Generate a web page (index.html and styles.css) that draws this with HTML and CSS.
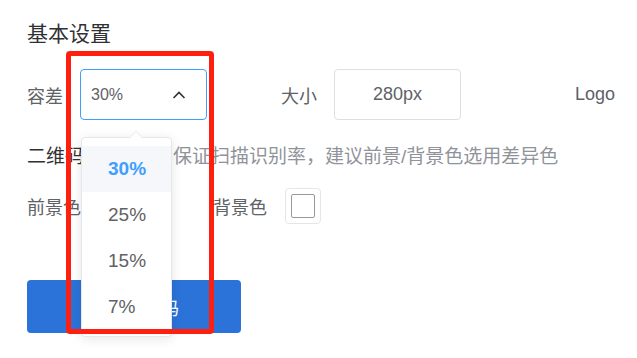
FILE: index.html
```html
<!DOCTYPE html>
<html lang="zh-CN">
<head>
    <meta charset="UTF-8">
    <title>二维码设置</title>
    <link rel="stylesheet" href="styles.css">
</head>
<body>
    <div class="panel">
        <h2 class="title">基本设置</h2>

        <div class="form-row row-basic">
            <span class="label">容差</span>
            <div class="select is-focus">
                <span class="select-value">30%</span>
                <svg class="select-arrow" width="14" height="14" viewBox="0 0 14 14">
                    <polyline points="1.5,10 7,4.5 12.5,10" fill="none" stroke="#303133" stroke-width="1.6"/>
                </svg>
            </div>
            <span class="label label-size">大小</span>
            <div class="input">280px</div>
            <span class="label label-logo">Logo</span>
        </div>

        <div class="form-row row-color-title">
            <span class="sub-title">二维码颜色</span>
            <span class="hint">为保证扫描识别率，建议前景/背景色选用差异色</span>
        </div>

        <div class="form-row row-color">
            <span class="label">前景色</span>
            <div class="picker"><span class="picker-color picker-dark"></span></div>
            <span class="label label-bg">背景色</span>
            <div class="picker"><span class="picker-color"></span></div>
        </div>

        <button class="btn-primary">下载二维码</button>
    </div>

    <!-- 下拉菜单 -->
    <div class="dropdown">
        <span class="dropdown-arrow"></span>
        <ul class="dropdown-list">
            <li class="dropdown-item selected">30%</li>
            <li class="dropdown-item">25%</li>
            <li class="dropdown-item">15%</li>
            <li class="dropdown-item">7%</li>
        </ul>
    </div>

    <!-- 标注框 -->
    <div class="highlight"></div>
</body>
</html>
```

FILE: styles.css
```css
body {
    margin: 0;
    font-family: "Liberation Sans", "Noto Sans CJK SC", sans-serif;
    background-color: #fff;
    color: #606266;
}
.panel {
    padding: 21px 0 0 27px;
}
.title {
    margin: 0;
    font-size: 21px;
    line-height: 26px;
    font-weight: normal;
    color: #303133;
}
.form-row {
    display: flex;
    align-items: center;
}
.row-basic {
    margin-top: 22px;
    height: 51px;
}
.label {
    font-size: 18px;
    color: #606266;
    white-space: nowrap;
}
.select {
    box-sizing: border-box;
    width: 127px;
    height: 51px;
    margin-left: 17px;
    padding: 0 20px 0 10px;
    border: 1px solid #dcdfe6;
    border-radius: 4px;
    display: flex;
    align-items: center;
    justify-content: space-between;
}
.select.is-focus {
    border-color: #409eff;
}
.select-value {
    font-size: 16px;
    color: #606266;
}
.label-size {
    margin-left: 74px;
}
.input {
    box-sizing: border-box;
    width: 127px;
    height: 51px;
    margin-left: 17px;
    border: 1px solid #dcdfe6;
    border-radius: 4px;
    display: flex;
    align-items: center;
    justify-content: center;
    font-size: 18px;
    color: #606266;
}
.label-logo {
    margin-left: 114px;
}
.row-color-title {
    margin-top: 20px;
    height: 28px;
}
.sub-title {
    font-size: 19px;
    color: #303133;
}
.hint {
    margin-left: 32px;
    font-size: 19px;
    color: #909399;
}
.row-color {
    margin-top: 20px;
    height: 36px;
}
.picker {
    box-sizing: border-box;
    width: 36px;
    height: 36px;
    margin-left: 18px;
    padding: 5px;
    border: 1px solid #e6e6e6;
    border-radius: 4px;
}
.picker-color {
    display: block;
    box-sizing: border-box;
    width: 100%;
    height: 100%;
    border: 1px solid #999;
    border-radius: 2px;
    background-color: #fff;
}
.picker-dark {
    background-color: #000;
}
.label-bg {
    margin-left: 78px;
}
.btn-primary {
    display: block;
    margin-top: 56px;
    width: 214px;
    height: 53px;
    border: none;
    border-radius: 4px;
    background-color: #2b73d9;
    color: #fff;
    font-family: inherit;
    font-size: 18px;
}
/* 下拉菜单 */
.dropdown {
    position: absolute;
    left: 81px;
    top: 137px;
    width: 91px;
    box-sizing: border-box;
    border: 1px solid #e4e7ed;
    border-radius: 4px;
    background-color: #fff;
    box-shadow: 0 2px 12px rgba(0, 0, 0, 0.1);
}
.dropdown-arrow {
    position: absolute;
    left: 48px;
    top: -7px;
    width: 0;
    height: 0;
    border: 6px solid transparent;
    border-top-width: 0;
    border-bottom-color: #e4e7ed;
}
.dropdown-arrow::after {
    content: "";
    position: absolute;
    left: -6px;
    top: 1px;
    border: 6px solid transparent;
    border-top-width: 0;
    border-bottom-color: #fff;
}
.dropdown-list {
    list-style: none;
    margin: 0;
    padding: 8px 0 6px;
}
.dropdown-item {
    height: 46px;
    line-height: 46px;
    padding-left: 26px;
    font-size: 19px;
    color: #606266;
}
.dropdown-item.selected {
    background-color: #f5f7fa;
    color: #409eff;
    font-weight: bold;
}
/* 红色标注框 */
.highlight {
    position: absolute;
    left: 66px;
    top: 51px;
    width: 148px;
    height: 283px;
    box-sizing: border-box;
    border: 5px solid #ff1f0f;
    border-radius: 4px;
}
```
